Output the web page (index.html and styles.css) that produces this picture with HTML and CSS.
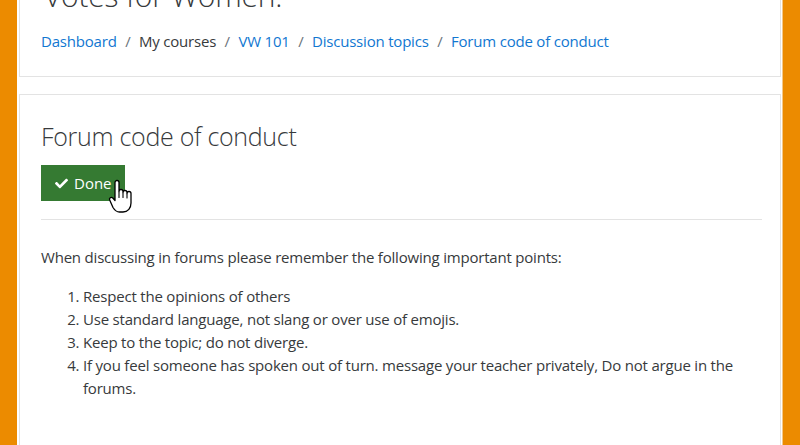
FILE: index.html
```html
<!DOCTYPE html>
<html lang="en">
<head>
<meta charset="utf-8">
<title>Forum code of conduct</title>
<link rel="stylesheet" href="styles.css">
</head>
<body>
<div class="frame">
  <div class="edge"></div>
  <main class="page">
    <header class="card header-card">
      <h1 class="course-title">Votes for Women.</h1>
      <nav class="breadcrumb">
        <a href="#">Dashboard</a><span class="sep">/</span>
        <span class="crumb">My courses</span><span class="sep">/</span>
        <a href="#">VW 101</a><span class="sep">/</span>
        <a href="#">Discussion topics</a><span class="sep">/</span>
        <a href="#">Forum code of conduct</a>
      </nav>
    </header>
    <section class="card content-card">
      <h2 class="page-title">Forum code of conduct</h2>
      <div class="completion">
        <button class="btn-done" type="button">
          <svg class="check" viewBox="0 0 512 512" aria-hidden="true"><path fill="#fff" d="M173.9 439.4l-166.4-166.4c-10-10-10-26.2 0-36.2l36.2-36.2c10-10 26.2-10 36.2 0L192 312.7 432.1 72.6c10-10 26.2-10 36.2 0l36.2 36.2c10 10 10 26.2 0 36.2l-294.4 294.4c-10 10-26.2 10-36.2 0z"/></svg>
          <span>Done</span>
        </button>
        <svg class="cursor" viewBox="0 0 26 34" aria-hidden="true">
          <path d="M7 3.5a2 2 0 0 1 4 0V12.5a2 2 0 0 1 4 0v1a2 2 0 0 1 4 0v1a2 2 0 0 1 4 0V24c0 5-3 9-8 9h-3.5c-3 0-5-2-6.5-4.5L1.8 21.3a1.9 1.9 0 0 1 3-2.3L7 21.5Z" fill="#fff" stroke="#000" stroke-width="1.3" stroke-linejoin="round"/>
          <path d="M11 13v5.5M15 14v4.5M19 15v4" stroke="#000" stroke-width="1.1" stroke-linecap="round"/>
        </svg>
      </div>
      <div class="intro">
        <p>When discussing in forums please remember the following important points:</p>
        <ol class="points">
          <li>Respect the opinions of others</li>
          <li>Use standard language, not slang or over use of emojis.</li>
          <li>Keep to the topic; do not diverge.</li>
          <li>If you feel someone has spoken out of turn. message your teacher privately, Do not argue in the forums.</li>
        </ol>
      </div>
    </section>
  </main>
  <div class="edge edge-right"></div>
</div>
</body>
</html>
```

FILE: styles.css
```css
html, body {
  margin: 0;
  padding: 0;
  height: 100%;
  overflow: hidden;
}
body {
  font-family: "Open Sans", "Noto Sans", sans-serif;
  font-size: 15px;
  letter-spacing: -0.2px;
  color: #373a3c;
  background: #fff;
}
.frame {
  display: flex;
  height: 445px;
  overflow: hidden;
}
.edge {
  width: 17px;
  flex: none;
  background: #ec8b00;
}
.edge-right {
  width: 18px;
  border-left: 1px solid #f3c88a;
  box-sizing: border-box;
}
.page {
  flex: 1;
  padding: 0 1px 0 2px;
  display: flex;
  flex-direction: column;
  gap: 17px;
  margin-top: -43px;
}
.card {
  border: 1px solid #e3e3e3;
  background: #fff;
  padding: 20px 21px;
}
.course-title {
  margin: 0 0 16px 3px;
  font-size: 30px;
  font-weight: 300;
  letter-spacing: -0.2px;
  line-height: 1.2;
}
.breadcrumb {
  display: flex;
  align-items: baseline;
  line-height: 22px;
  padding-bottom: 4px;
}
.breadcrumb a {
  color: #1177d1;
  text-decoration: none;
}
.sep {
  color: #6a737b;
  padding: 0 8.5px;
}
.content-card {
  flex: none;
  min-height: 440px;
}
.page-title {
  margin: 6px 0 14px;
  font-size: 25px;
  font-weight: 300;
  letter-spacing: -0.3px;
  line-height: 1.2;
}
.completion {
  position: relative;
  padding-bottom: 18px;
  margin-right: -3px;
  border-bottom: 1px solid #e3e3e3;
}
.btn-done {
  display: inline-flex;
  align-items: center;
  gap: 6px;
  height: 36px;
  padding: 0 12px 0 13px;
  background: #357a32;
  border: 1px solid #357a32;
  color: #fff;
  font: inherit;
  font-size: 15px;
  cursor: pointer;
}
.check {
  width: 13px;
  height: 13px;
}
.cursor {
  position: absolute;
  left: 67px;
  top: 14px;
  width: 26px;
  height: 34px;
}
.intro p {
  margin: 26px 0 16px;
  line-height: 23px;
}
.points {
  margin: 0;
  padding-left: 42px;
  line-height: 23px;
}
```
